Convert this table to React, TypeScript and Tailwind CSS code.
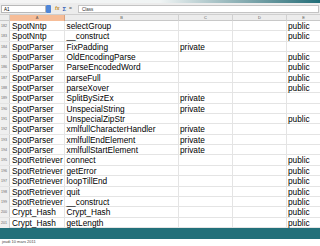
const rows: [number, string, string, string, string][] = [
  [182, "SpotNntp", "selectGroup", "", "public"],
  [183, "SpotNntp", "__construct", "", "public"],
  [184, "SpotParser", "FixPadding", "private", ""],
  [185, "SpotParser", "OldEncodingParse", "", "public"],
  [186, "SpotParser", "ParseEncodedWord", "", "public"],
  [187, "SpotParser", "parseFull", "", "public"],
  [188, "SpotParser", "parseXover", "", "public"],
  [189, "SpotParser", "SplitBySizEx", "private", ""],
  [190, "SpotParser", "UnspecialString", "private", ""],
  [191, "SpotParser", "UnspecialZipStr", "", "public"],
  [192, "SpotParser", "xmlfullCharacterHandler", "private", ""],
  [193, "SpotParser", "xmlfullEndElement", "private", ""],
  [194, "SpotParser", "xmlfullStartElement", "private", ""],
  [195, "SpotRetriever", "connect", "", "public"],
  [196, "SpotRetriever", "getError", "", "public"],
  [197, "SpotRetriever", "loopTillEnd", "", "public"],
  [198, "SpotRetriever", "quit", "", "public"],
  [199, "SpotRetriever", "__construct", "", "public"],
  [200, "Crypt_Hash", "Crypt_Hash", "", "public"],
  [201, "Crypt_Hash", "getLength", "", "public"],
];

const cols = "grid grid-cols-[10px_55px_114px_54px_54px_1fr]";

export default function App() {
  return (
    <div className="w-[320px] h-[246px] overflow-hidden bg-white flex flex-col font-['Liberation_Sans',Arial,sans-serif] text-black">
      {/* title strip */}
      <div className="h-[3px] shrink-0 bg-gradient-to-r from-[#f4f4f4] via-[#f0f4f4] to-[#1f6e78]" />

      {/* formula bar */}
      <div className="h-[12px] shrink-0 flex items-center gap-[2px] px-[1px] bg-[#ececec] border-b border-[#cfcfcf]">
        <div className="w-[45px] h-[8px] bg-white border border-[#b9b9b9] text-[4.5px] leading-[7px] pl-[2px]">A1</div>
        <div className="w-[5px] h-[8px] rounded-[1px] bg-[#4f86d8] -ml-[2px]" />
        <span className="ml-[2px] text-[5px] leading-none text-[#c08a1e] italic font-bold">fx</span>
        <span className="ml-[1px] text-[6px] leading-none text-[#3a63b8] font-bold">Σ</span>
        <span className="ml-[1px] text-[5px] leading-none text-[#555]">=</span>
        <div className="ml-[4px] flex-1 h-[8px] bg-white border border-[#c4c4c4] text-[4.5px] leading-[7px] pl-[3px] text-[#333]">Class</div>
      </div>

      {/* column headers */}
      <div className={`${cols} h-[6px] shrink-0 text-[4px] leading-[6px] text-[#555] bg-[#ececec] border-b border-[#c8c8c8]`}>
        <div className="border-r border-[#cfcfcf]" />
        <div className="text-center bg-[#f6bd98] border-r border-[#d9a27f]">A</div>
        <div className="text-center border-r border-[#d0d0d0]">B</div>
        <div className="text-center border-r border-[#d0d0d0]">C</div>
        <div className="text-center border-r border-[#d0d0d0]">D</div>
        <div className="text-center">E</div>
      </div>

      {/* data */}
      <div className="flex flex-col">
        {rows.map(([n, a, b, c, e]) => (
          <div key={n} className={`${cols} h-[10.35px] text-[8.3px] leading-[10px] border-b border-[#e4e4e4]`}>
            <div className="bg-[#efefef] border-r border-[#cfcfcf] text-[3.6px] leading-[10px] text-[#666] pl-[1px]">{n}</div>
            <div className="pl-[2px] whitespace-nowrap overflow-visible border-r border-[#e4e4e4] relative z-10">{a}</div>
            <div className="pl-[1.5px] whitespace-nowrap border-r border-[#e4e4e4]">{b}</div>
            <div className="pl-[1px] whitespace-nowrap border-r border-[#e4e4e4]">{c}</div>
            <div className="border-r border-[#e4e4e4]" />
            <div className="pl-[1px] whitespace-nowrap">{e}</div>
          </div>
        ))}
      </div>

      {/* bottom bar */}
      <div className="mt-[0.5px] h-[10.5px] shrink-0 bg-[#22707a]" />
      <div className="flex-1 text-[4px] leading-[6px] pl-[2px] text-[#444]">jeudi 10 mars 2011</div>
    </div>
  );
}
